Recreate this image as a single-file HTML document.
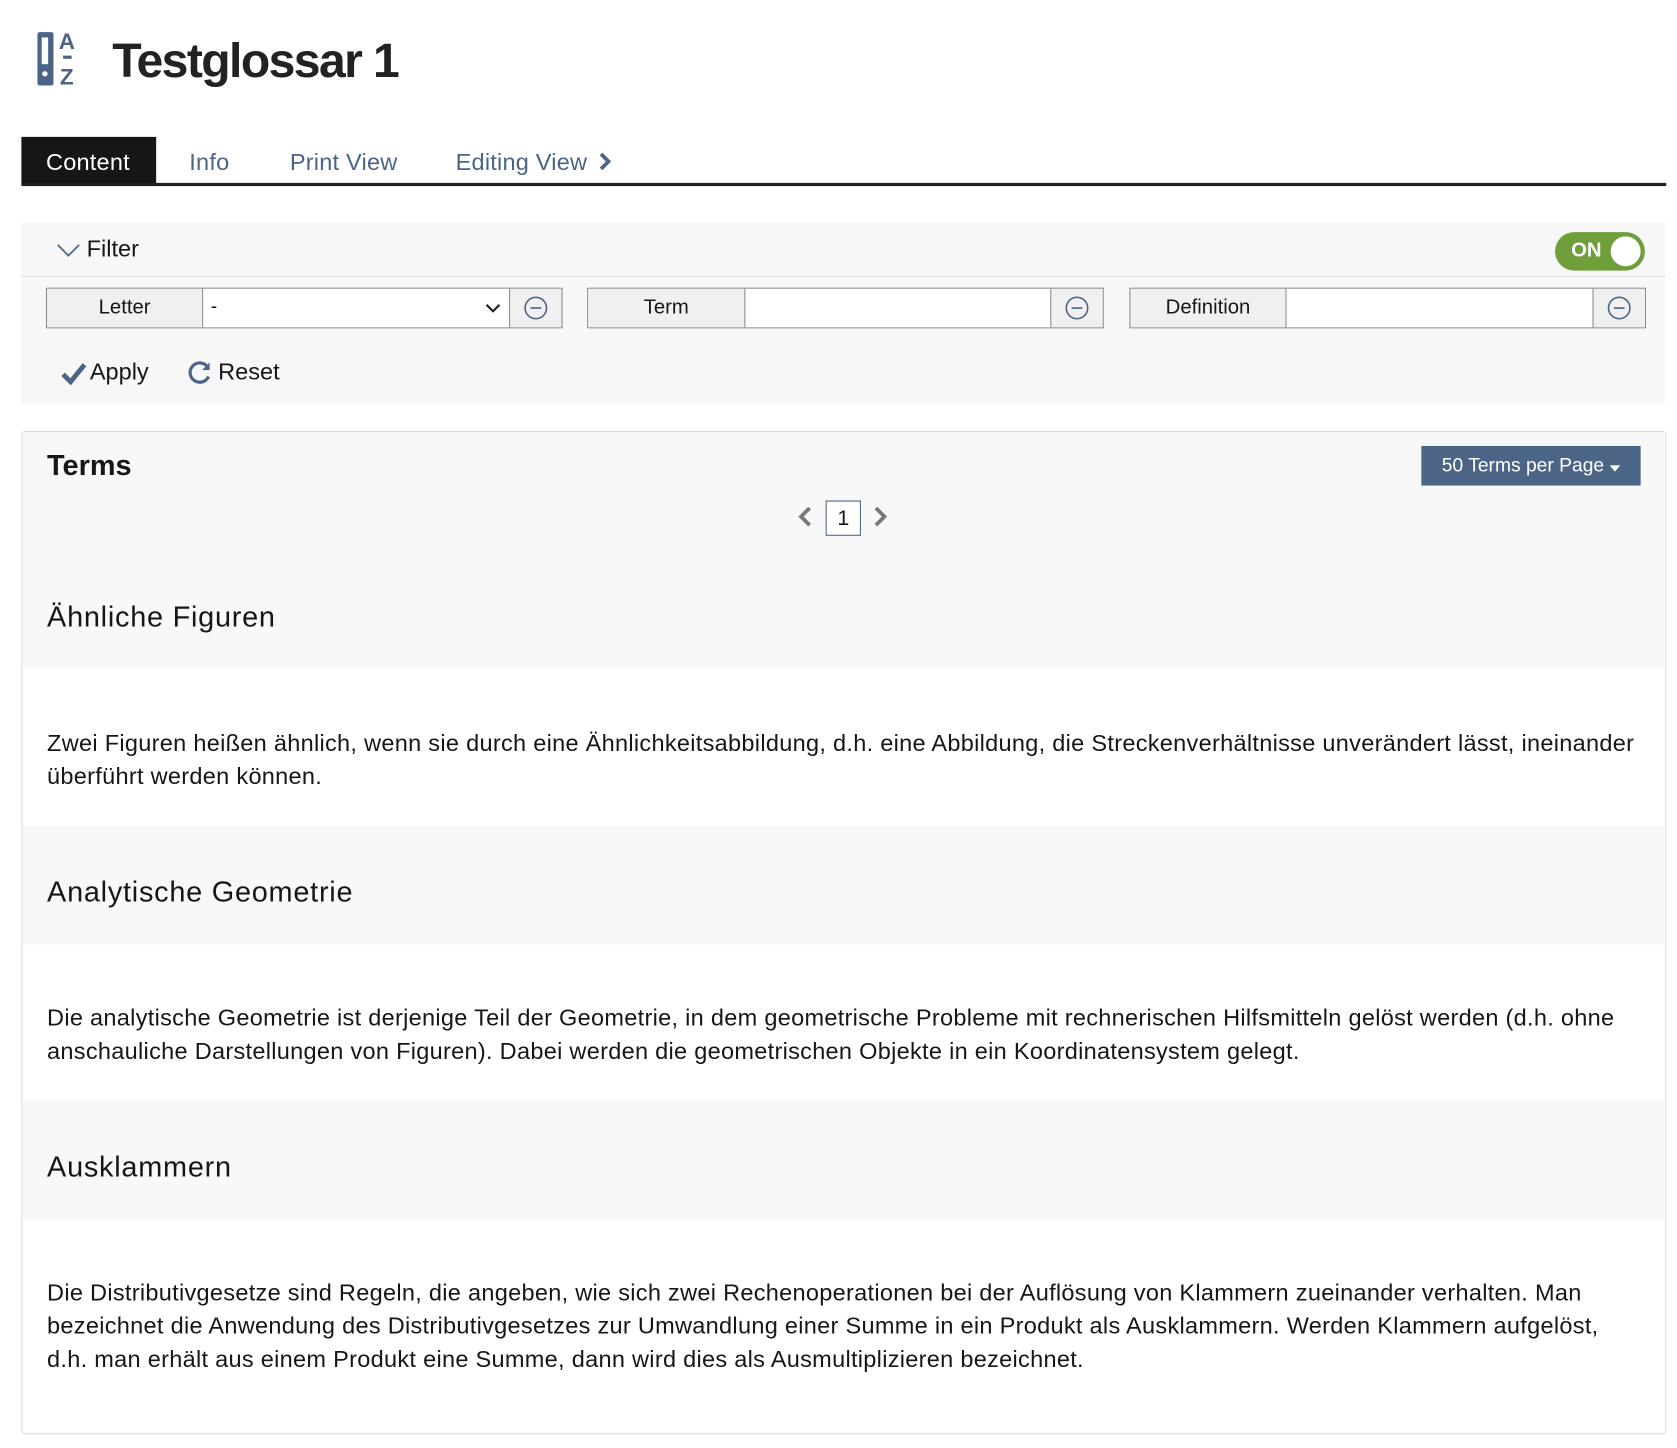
<!DOCTYPE html>
<html><head><meta charset="utf-8"><style>
html,body{margin:0;padding:0;background:#fff;width:1677px;height:1448px;overflow:hidden}
#w{position:absolute;left:0;top:0;width:1568px;height:1354px;transform:scale(1.0695);transform-origin:0 0;font-family:"Liberation Sans",sans-serif;color:#161616}
.a{position:absolute}
.tab{position:absolute;top:128px;height:44px;line-height:48px;font-size:22px;color:#4c6586;letter-spacing:0.2px}
.grp{position:absolute;top:269px;height:38px;border:1px solid #888;box-sizing:border-box;display:flex}
.grp .l{background:#f0f0f0;border-right:1px solid #888;text-align:center;line-height:36px;font-size:19px}
.grp .i{background:#fff;border-right:1px solid #888;flex:1;position:relative}
.grp .b{background:#f0f0f0;width:48px;display:flex;align-items:center;justify-content:center}
.def{font-size:22px;line-height:31px;white-space:nowrap;position:absolute;left:44px;letter-spacing:0.27px}
.h{font-size:27px;position:absolute;left:44px;letter-spacing:0.7px}
</style></head><body><div id="w">
<svg class="a" style="left:33px;top:28px" width="44" height="54" viewBox="0 0 44 54">
<rect x="2" y="2" width="15" height="50" rx="2" fill="#4c6586"/><rect x="6" y="7" width="6" height="25" fill="#fff"/><circle cx="9" cy="41" r="2.5" fill="#fff"/>
<text x="22" y="18" font-family="Liberation Sans" font-size="21" font-weight="bold" fill="#4c6586">A</text>
<rect x="26" y="24" width="8" height="3" fill="#4c6586"/>
<text x="23" y="51" font-family="Liberation Sans" font-size="21" font-weight="bold" fill="#4c6586">Z</text></svg>
<div class="a" style="left:105px;top:31px;font-size:45px;font-weight:bold;color:#222;letter-spacing:-1.5px">Testglossar 1</div>
<div class="a" style="left:20px;top:128px;width:126px;height:44px;background:#161616"></div>
<div class="tab" style="left:43px;color:#fff">Content</div>
<div class="tab" style="left:177px">Info</div>
<div class="tab" style="left:271px">Print View</div>
<div class="tab" style="left:426px">Editing View <svg width="14" height="18" viewBox="0 0 14 18" style="vertical-align:-1px;margin-left:4px"><path d="M3 2l7 7-7 7" stroke="#4c6586" stroke-width="3.5" fill="none"/></svg></div>
<div class="a" style="left:20px;top:171px;width:1538px;height:3px;background:#222"></div>

<div class="a" style="left:20px;top:208px;width:1537px;height:170px;background:#f7f7f7"></div>
<div class="a" style="left:20px;top:258px;width:1537px;height:1px;background:#ddd"></div>
<svg class="a" style="left:52px;top:226px" width="24" height="16"><path d="M2 3l10 10 10-10" stroke="#4c6586" stroke-width="1.6" fill="none"/></svg>
<div class="a" style="left:81px;top:220px;font-size:22px">Filter</div>
<div class="a" style="left:1454px;top:217px;width:84px;height:36px;border-radius:18px;background:#6e9f3a"></div>
<div class="a" style="left:1469px;top:224px;font-size:19px;font-weight:bold;color:#fff">ON</div>
<div class="a" style="left:1506px;top:221px;width:28px;height:28px;border-radius:14px;background:#fff"></div>

<div class="grp" style="left:43px;width:483px"><div class="l" style="width:145px">Letter</div><div class="i"><span class="a" style="left:7px;top:6px;font-size:18px">-</span><svg class="a" style="right:8px;top:13px" width="14" height="10"><path d="M1 2l6 6 6-6" stroke="#222" stroke-width="2" fill="none"/></svg></div><div class="b"><svg width="24" height="24"><circle cx="12" cy="12" r="10" stroke="#4c6586" stroke-width="1.5" fill="none"/><path d="M7 12h10" stroke="#4c6586" stroke-width="1.5"/></svg></div></div>
<div class="grp" style="left:549px;width:483px"><div class="l" style="width:146px">Term</div><div class="i"></div><div class="b"><svg width="24" height="24"><circle cx="12" cy="12" r="10" stroke="#4c6586" stroke-width="1.5" fill="none"/><path d="M7 12h10" stroke="#4c6586" stroke-width="1.5"/></svg></div></div>
<div class="grp" style="left:1056px;width:483px"><div class="l" style="width:145px">Definition</div><div class="i"></div><div class="b"><svg width="24" height="24"><circle cx="12" cy="12" r="10" stroke="#4c6586" stroke-width="1.5" fill="none"/><path d="M7 12h10" stroke="#4c6586" stroke-width="1.5"/></svg></div></div>

<svg class="a" style="left:57px;top:338px" width="24" height="22"><path d="M2 12l7 7 13-16" stroke="#4c6586" stroke-width="4.5" fill="none"/></svg>
<div class="a" style="left:84px;top:335px;font-size:22px">Apply</div>
<svg class="a" style="left:175px;top:336px" width="24" height="24"><path d="M19 7A9 9 0 1 0 20 16" stroke="#4c6586" stroke-width="3" fill="none"/><path d="M21 3v7h-7z" fill="#4c6586"/></svg>
<div class="a" style="left:204px;top:335px;font-size:22px">Reset</div>

<div class="a" style="left:20px;top:403px;width:1536px;height:936px;border:1px solid #ddd;border-radius:3px;background:#fff"></div>
<div class="a" style="left:21px;top:404px;width:1535px;height:221px;background:#f8f8f8"></div>
<div class="a" style="left:44px;top:420px;font-size:27px;font-weight:bold">Terms</div>
<div class="a" style="left:1329px;top:417px;width:205px;height:37px;background:#4c6586;color:#fff;font-size:18px;line-height:37px;text-align:center">50 Terms per Page <svg width="10" height="6"><path d="M0 0h10L5 6z" fill="#fff"/></svg></div>
<svg class="a" style="left:745px;top:473px" width="16" height="20"><path d="M12 2L4 10l8 8" stroke="#777" stroke-width="3.5" fill="none"/></svg>
<div class="a" style="left:772px;top:468px;width:31px;height:31px;border:1px solid #4c6586;background:#fff;text-align:center;line-height:32px;font-size:20px">1</div>
<svg class="a" style="left:815px;top:473px" width="16" height="20"><path d="M4 2l8 8-8 8" stroke="#777" stroke-width="3.5" fill="none"/></svg>
<div class="h" style="top:562px">Ähnliche Figuren</div>
<div class="def" style="top:679px">Zwei Figuren heißen ähnlich, wenn sie durch eine Ähnlichkeitsabbildung, d.h. eine Abbildung, die Streckenverhältnisse unverändert lässt, ineinander<br>überführt werden können.</div>
<div class="a" style="left:21px;top:772px;width:1535px;height:111px;background:#f8f8f8"></div>
<div class="h" style="top:819px">Analytische Geometrie</div>
<div class="def" style="top:936px">Die analytische Geometrie ist derjenige Teil der Geometrie, in dem geometrische Probleme mit rechnerischen Hilfsmitteln gelöst werden (d.h. ohne<br>anschauliche Darstellungen von Figuren). Dabei werden die geometrischen Objekte in ein Koordinatensystem gelegt.</div>
<div class="a" style="left:21px;top:1029px;width:1535px;height:111px;background:#f8f8f8"></div>
<div class="h" style="top:1076px">Ausklammern</div>
<div class="def" style="top:1193px">Die Distributivgesetze sind Regeln, die angeben, wie sich zwei Rechenoperationen bei der Auflösung von Klammern zueinander verhalten. Man<br>bezeichnet die Anwendung des Distributivgesetzes zur Umwandlung einer Summe in ein Produkt als Ausklammern. Werden Klammern aufgelöst,<br>d.h. man erhält aus einem Produkt eine Summe, dann wird dies als Ausmultiplizieren bezeichnet.</div>
</div></body></html>
